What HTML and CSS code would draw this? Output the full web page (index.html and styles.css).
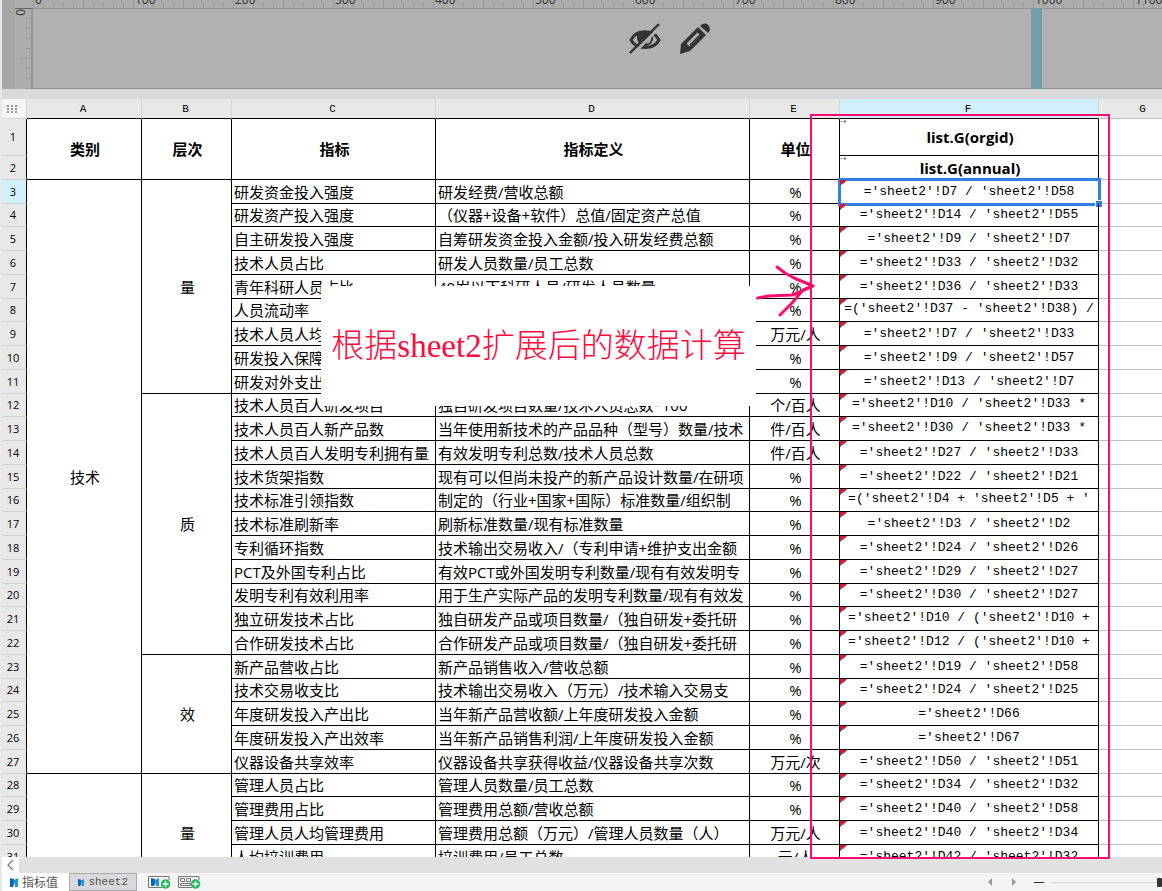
FILE: index.html
```html
<!DOCTYPE html>
<html lang="zh-CN">

<head>
  <meta charset="UTF-8">
  <title>指标值</title>
  <link rel="stylesheet" href="styles.css">
</head>

<body>
  <div class="designer">
    <div class="margin-bar"></div>
    <div class="ruler-left"><span>0</span></div>
    <div class="canvas-area">
      <div class="ruler-top">
        <span>0</span><span>100</span><span>200</span><span>300</span><span>400</span><span>500</span><span>600</span><span>700</span><span>800</span><span>900</span><span>1000</span><span>1100</span>
      </div>
      <div class="canvas">
        <div class="canvas-page"></div>
        <div class="canvas-handle"></div>
        <div class="canvas-rest"></div>
        <div class="canvas-tools">
          <button type="button" aria-label="隐藏">
            <svg width="34" height="32" viewBox="0 0 34 32">
              <path d="M3 17 C8 6 26 6 31 17 C26 27 8 27 3 17 Z" fill="none" stroke="#333" stroke-width="3"/>
              <path d="M9 10 C13 7 21 7 25 10 C26 18 23 23 17 23 C11 23 8 17 9 10 Z" fill="#333"/>
              <path d="M19 20 Q23 18 22 13" fill="none" stroke="#b1b1b1" stroke-width="2"/>
              <path d="M3 33 L33 3" stroke="#b1b1b1" stroke-width="3"/>
              <path d="M2 30 L31 1" stroke="#333" stroke-width="2.4"/>
            </svg>
          </button>
          <button type="button" aria-label="编辑">
            <svg width="32" height="32" viewBox="0 0 32 32">
              <path d="M1 31 L2 21 L19 4 L27 12 L11 28 Z" fill="#333"/>
              <path d="M21 3 C24 0 27 0 29 2 C32 5 31 8 29 10 Z" fill="#333"/>
              <path d="M9 22 L20 11" stroke="#b1b1b1" stroke-width="4"/>
              <path d="M11 22 L22 11" stroke="#333" stroke-width="1.6"/>
            </svg>
          </button>
        </div>
      </div>
    </div>
  </div>

  <div class="splitter"></div>

  <div class="sheet">
    <table class="grid">
      <colgroup>
        <col class="w-num"><col class="w-a"><col class="w-b"><col class="w-c"><col class="w-d"><col class="w-e"><col class="w-f"><col class="w-g">
      </colgroup>
      <thead>
        <tr>
          <th class="corner">
            <svg width="11" height="9" viewBox="0 0 11 9" fill="#999">
              <path d="M0 0h2v2h-2z M4 0h2v2h-2z M8 0h2v2h-2z M0 3h2v2h-2z M4 3h2v2h-2z M8 3h2v2h-2z M0 6h2v2h-2z M4 6h2v2h-2z M8 6h2v2h-2z"/>
            </svg>
          </th>
          <th>A</th><th>B</th><th>C</th><th>D</th><th>E</th><th class="active">F</th><th class="blank">G</th>
        </tr>
      </thead>
      <tbody class="titles">
        <tr class="tall"><th>1</th><td rowspan="2">类别</td><td rowspan="2">层次</td><td rowspan="2">指标</td><td rowspan="2">指标定义</td><td rowspan="2">单位</td><td class="expand">list.G(orgid)</td><td class="blank"></td></tr>
        <tr><th>2</th><td class="expand">list.G(annual)</td><td class="blank"></td></tr>
      </tbody>
      <tbody class="rows">
        <tr><th class="active">3</th><td rowspan="25" class="group">技术</td><td rowspan="9" class="group">量</td><td>研发资金投入强度</td><td>研发经费/营收总额</td><td class="unit">%</td><td class="formula selected">='sheet2'!D7 / 'sheet2'!D58</td><td class="blank"></td></tr>
        <tr><th>4</th><td>研发资产投入强度</td><td>（仪器+设备+软件）总值/固定资产总值</td><td class="unit">%</td><td class="formula">='sheet2'!D14 / 'sheet2'!D55</td><td class="blank"></td></tr>
        <tr><th>5</th><td>自主研发投入强度</td><td>自筹研发资金投入金额/投入研发经费总额</td><td class="unit">%</td><td class="formula">='sheet2'!D9 / 'sheet2'!D7</td><td class="blank"></td></tr>
        <tr><th>6</th><td>技术人员占比</td><td>研发人员数量/员工总数</td><td class="unit">%</td><td class="formula">='sheet2'!D33 / 'sheet2'!D32</td><td class="blank"></td></tr>
        <tr><th>7</th><td>青年科研人员占比</td><td>40岁以下科研人员/研发人员数量</td><td class="unit">%</td><td class="formula">='sheet2'!D36 / 'sheet2'!D33</td><td class="blank"></td></tr>
        <tr><th>8</th><td>人员流动率</td><td></td><td class="unit">%</td><td class="formula"><div class="clip">=('sheet2'!D37 - 'sheet2'!D38) /<br>'sheet2'!D33</div></td><td class="blank"></td></tr>
        <tr><th>9</th><td>技术人员人均</td><td></td><td class="unit">万元/人</td><td class="formula">='sheet2'!D7 / 'sheet2'!D33</td><td class="blank"></td></tr>
        <tr><th>10</th><td>研发投入保障</td><td></td><td class="unit">%</td><td class="formula">='sheet2'!D9 / 'sheet2'!D57</td><td class="blank"></td></tr>
        <tr><th>11</th><td>研发对外支出</td><td></td><td class="unit">%</td><td class="formula">='sheet2'!D13 / 'sheet2'!D7</td><td class="blank"></td></tr>
        <tr><th>12</th><td rowspan="11" class="group">质</td><td>技术人员百人研发项目</td><td>独自研发项目数量/技术人员总数*100</td><td class="unit">个/百人</td><td class="formula"><div class="clip">='sheet2'!D10 / 'sheet2'!D33 *</div></td><td class="blank"></td></tr>
        <tr><th>13</th><td>技术人员百人新产品数</td><td>当年使用新技术的产品品种（型号）数量/技术</td><td class="unit">件/百人</td><td class="formula"><div class="clip">='sheet2'!D30 / 'sheet2'!D33 *</div></td><td class="blank"></td></tr>
        <tr><th>14</th><td>技术人员百人发明专利拥有量</td><td>有效发明专利总数/技术人员总数</td><td class="unit">件/百人</td><td class="formula">='sheet2'!D27 / 'sheet2'!D33</td><td class="blank"></td></tr>
        <tr><th>15</th><td>技术货架指数</td><td>现有可以但尚未投产的新产品设计数量/在研项</td><td class="unit">%</td><td class="formula">='sheet2'!D22 / 'sheet2'!D21</td><td class="blank"></td></tr>
        <tr><th>16</th><td>技术标准引领指数</td><td>制定的（行业+国家+国际）标准数量/组织制</td><td class="unit">%</td><td class="formula"><div class="clip">=('sheet2'!D4 + 'sheet2'!D5 + '<br>sheet2'!D6) / 'sheet2'!D3</div></td><td class="blank"></td></tr>
        <tr><th>17</th><td>技术标准刷新率</td><td>刷新标准数量/现有标准数量</td><td class="unit">%</td><td class="formula">='sheet2'!D3 / 'sheet2'!D2</td><td class="blank"></td></tr>
        <tr><th>18</th><td>专利循环指数</td><td>技术输出交易收入/（专利申请+维护支出金额</td><td class="unit">%</td><td class="formula">='sheet2'!D24 / 'sheet2'!D26</td><td class="blank"></td></tr>
        <tr><th>19</th><td>PCT及外国专利占比</td><td>有效PCT或外国发明专利数量/现有有效发明专</td><td class="unit">%</td><td class="formula">='sheet2'!D29 / 'sheet2'!D27</td><td class="blank"></td></tr>
        <tr><th>20</th><td>发明专利有效利用率</td><td>用于生产实际产品的发明专利数量/现有有效发</td><td class="unit">%</td><td class="formula">='sheet2'!D30 / 'sheet2'!D27</td><td class="blank"></td></tr>
        <tr><th>21</th><td>独立研发技术占比</td><td>独自研发产品或项目数量/（独自研发+委托研</td><td class="unit">%</td><td class="formula"><div class="clip">='sheet2'!D10 / ('sheet2'!D10 +<br>'sheet2'!D11 + 'sheet2'!D12)</div></td><td class="blank"></td></tr>
        <tr><th>22</th><td>合作研发技术占比</td><td>合作研发产品或项目数量/（独自研发+委托研</td><td class="unit">%</td><td class="formula"><div class="clip">='sheet2'!D12 / ('sheet2'!D10 +<br>'sheet2'!D11 + 'sheet2'!D12)</div></td><td class="blank"></td></tr>
        <tr><th>23</th><td rowspan="5" class="group">效</td><td>新产品营收占比</td><td>新产品销售收入/营收总额</td><td class="unit">%</td><td class="formula">='sheet2'!D19 / 'sheet2'!D58</td><td class="blank"></td></tr>
        <tr><th>24</th><td>技术交易收支比</td><td>技术输出交易收入（万元）/技术输入交易支</td><td class="unit">%</td><td class="formula">='sheet2'!D24 / 'sheet2'!D25</td><td class="blank"></td></tr>
        <tr><th>25</th><td>年度研发投入产出比</td><td>当年新产品营收额/上年度研发投入金额</td><td class="unit">%</td><td class="formula">='sheet2'!D66</td><td class="blank"></td></tr>
        <tr><th>26</th><td>年度研发投入产出效率</td><td>当年新产品销售利润/上年度研发投入金额</td><td class="unit">%</td><td class="formula">='sheet2'!D67</td><td class="blank"></td></tr>
        <tr><th>27</th><td>仪器设备共享效率</td><td>仪器设备共享获得收益/仪器设备共享次数</td><td class="unit">万元/次</td><td class="formula">='sheet2'!D50 / 'sheet2'!D51</td><td class="blank"></td></tr>
        <tr><th>28</th><td rowspan="5" class="group"></td><td rowspan="5" class="group">量</td><td>管理人员占比</td><td>管理人员数量/员工总数</td><td class="unit">%</td><td class="formula">='sheet2'!D34 / 'sheet2'!D32</td><td class="blank"></td></tr>
        <tr><th>29</th><td>管理费用占比</td><td>管理费用总额/营收总额</td><td class="unit">%</td><td class="formula">='sheet2'!D40 / 'sheet2'!D58</td><td class="blank"></td></tr>
        <tr><th>30</th><td>管理人员人均管理费用</td><td>管理费用总额（万元）/管理人员数量（人）</td><td class="unit">万元/人</td><td class="formula">='sheet2'!D40 / 'sheet2'!D34</td><td class="blank"></td></tr>
        <tr><th>31</th><td>人均培训费用</td><td>培训费用/员工总数</td><td class="unit">元/人</td><td class="formula">='sheet2'!D42 / 'sheet2'!D32</td><td class="blank"></td></tr>
        <tr><th></th><td></td><td></td><td></td><td></td><td class="blank"></td></tr>
      </tbody>
    </table>
  </div>

  <div class="scrollbar"><button type="button" aria-label="向左滚动">
    <svg width="8" height="12" viewBox="0 0 8 12"><path d="M6 1 L1 6 L6 11" fill="none" stroke="#777" stroke-width="1.2"/></svg>
  </button></div>

  <div class="tabs">
    <a href="#sheet1" class="tab current">
      <svg width="8" height="9" viewBox="0 0 8 9"><path d="M0 0 L4 1 V6 L3 9 H0 Z" fill="#0a67b2"/><path d="M4 2 L8 0 V9 H5 V6 L3 5 Z" fill="#2196d8"/></svg>
      指标值</a>
    <a href="#sheet2" class="tab other">
      <svg width="8" height="9" viewBox="0 0 8 9"><path d="M0 0 L4 1 V6 L3 9 H0 Z" fill="#0a67b2"/><path d="M4 2 L8 0 V9 H5 V6 L3 5 Z" fill="#2196d8"/></svg>
      sheet2</a>
    <button type="button" class="add" aria-label="新增报表">
      <svg width="23" height="14" viewBox="0 0 23 14">
        <path d="M21 5 V1.5 H0.5 V12.5 H14" fill="none" stroke="#777"/>
        <path d="M3 3 L7 4 V9 L6 11 H3 Z" fill="#0a67b2"/><path d="M7 5 L11 3 V11 H8 V9 L6 8 Z" fill="#2196d8"/>
        <circle cx="17.5" cy="9" r="4.7" fill="#1db954"/><path d="M14.5 9 H20.5 M17.5 6 V12" stroke="#fff" stroke-width="1.5"/>
      </svg>
    </button>
    <button type="button" class="add" aria-label="新增聚合块">
      <svg width="23" height="14" viewBox="0 0 23 14">
        <path d="M21 5 V1.5 H0.5 V12.5 H14 M2.5 3.5 H6.5 V6.5 H2.5 Z M8.5 3.5 H12.5 V6.5 H8.5 Z M2.5 10.5 V8.5 H12.5 V10.5 Z" fill="none" stroke="#777"/>
        <circle cx="17.5" cy="9" r="4.7" fill="#1db954"/><path d="M14.5 9 H20.5 M17.5 6 V12" stroke="#fff" stroke-width="1.5"/>
      </svg>
    </button>
    <div class="zoom">
      <svg width="28" height="8" viewBox="0 0 28 8" fill="#999"><path d="M4 0 V8 L0 4 Z M24 0 V8 L28 4 Z"/></svg>
      <button type="button" class="minus" aria-label="缩小"></button>
      <input type="range" min="0" max="100" value="100" aria-label="缩放">
    </div>
  </div>

  <!-- notes on top of the sheet -->
  <div class="mark-box"></div>
  <div class="note">根据sheet2扩展后的数据计算</div>
  <svg class="mark-arrow" width="60" height="54" viewBox="0 0 60 54">
    <path d="M2 34 L12 32 L36 31 L44 28 L57 22 M21 3 L29 9 L38 14 L50 19 L57 22 L47 26 L36 39 L24 51" fill="none" stroke="#ff0d6e" stroke-width="3" stroke-linejoin="round" stroke-linecap="round"/>
  </svg>
</body>

</html>
```
FILE: styles.css
```css
* {
  box-sizing: border-box;
}

body {
  margin: 0;
  padding-left: 2px;
  height: 100vh;
  display: flex;
  flex-direction: column;
  position: relative;
  overflow: hidden;
  background-color: #e8e8e8;
  color: #000;
  font-family: "Open Sans", "Noto Sans CJK SC", sans-serif;
  font-size: 15px;
}

button {
  padding: 0;
  border: none;
  background: none;
  display: flex;
  align-items: center;
  justify-content: center;
}

svg {
  display: block;
}

/* report designer behind the sheet */
.designer {
  display: flex;
  height: 89px;
  flex: none;
  background-color: #adadad;
}

.margin-bar {
  width: 13px;
  background-color: #a7a7a7;
}

.ruler-left {
  width: 18px;
  margin-top: 8px;
  border-top: 1px solid #666;
  border-right: 2px solid #979797;
  background-image:
    linear-gradient(#999, #999),
    repeating-linear-gradient(to bottom, transparent 0 9px, #999 9px 10px);
  background-size: 11px 1px, 5px 100%;
  background-position: right 49px, right 0;
  background-repeat: no-repeat;
  color: #333;
  font-size: 12px;
}

.ruler-left span {
  display: block;
  width: 10px;
  line-height: 10px;
  writing-mode: vertical-rl;
}

.canvas-area {
  flex: 1;
  min-width: 0;
  display: flex;
  flex-direction: column;
}

.ruler-top {
  display: flex;
  height: 8px;
  overflow: hidden;
  line-height: 0;
  font-size: 12px;
  color: #333;
  background-image:
    repeating-linear-gradient(to right, #999 0 1px, transparent 1px 50px),
    repeating-linear-gradient(to right, #999 0 1px, transparent 1px 10px);
  background-size: 100% 8px, 100% 5px;
  background-position: 0 0, 0 3px;
  background-repeat: no-repeat;
}

.ruler-top span {
  flex: 0 0 100px;
  padding-left: 2px;
}

.canvas {
  flex: 1;
  display: flex;
  position: relative;
  background-color: #b1b1b1;
}

.canvas-page {
  flex: 0 0 999px;
  border: 1px solid #929292;
  border-left: none;
}

.canvas-handle {
  width: 10px;
  background-color: #6f9eaa;
}

.canvas-rest {
  flex: 1;
  border-top: 1px solid #929292;
  border-bottom: 1px solid #929292;
}

.canvas-tools {
  position: absolute;
  top: 15px;
  left: 595px;
  display: flex;
  gap: 17px;
}

.splitter {
  height: 10px;
  flex: none;
  background-color: #d9d9db;
}

/* sheet */
.sheet {
  flex: 1;
  min-height: 0;
  overflow: hidden;
  background-color: #fff;
}

.grid {
  width: 1187px;
  table-layout: fixed;
  border-collapse: separate;
  border-spacing: 0;
}

.w-num { width: 25px; }
.w-a { width: 115px; }
.w-b { width: 90px; }
.w-c { width: 204px; }
.w-d { width: 314px; }
.w-e { width: 90px; }
.w-f { width: 259px; }
.w-g { width: 90px; }

.grid th,
.grid td {
  padding: 0;
  border-right: 1px solid #000;
  border-bottom: 1px solid #000;
  line-height: 20px;
  white-space: nowrap;
}

.grid thead th {
  height: 20px;
  padding: 2px 2px 0 0;
  border-right-color: #d5d5d8;
  background-color: #e8e8e8;
  font-family: "Liberation Mono", monospace;
  font-size: 11px;
  font-weight: normal;
  line-height: 17px;
}

.grid thead .corner {
  border-bottom-color: #d5d5d8;
  background-color: #f5f5f8;
}

.corner svg {
  margin-left: 5px;
}

.grid tbody th {
  padding-right: 2px;
  border-bottom-color: #cfcfd6;
  background-color: #e8e8e8;
  font-size: 11px;
  font-weight: normal;
}

.grid th.active {
  background-color: #cff0fc;
}

.grid .blank {
  border-right-color: #c0c0c0;
  border-bottom-color: #c0c0c0;
}

.titles tr {
  height: 24px;
}

.titles .tall {
  height: 37px;
}

.titles td {
  padding-left: 2px;
  font-weight: bold;
  text-align: center;
}

.rows tr {
  height: 24px;
}

.rows tr:nth-child(4n + 2) {
  height: 23px;
}

.rows td {
  padding-left: 2px;
  overflow: hidden;
}

.rows .group,
.rows .unit {
  text-align: center;
}

.grid .formula,
.grid .expand {
  position: relative;
  text-align: center;
}

.grid .formula {
  padding: 0;
  font-family: "Liberation Mono", monospace;
  font-size: 13px;
}

.clip {
  height: 22px;
  line-height: 20px;
  overflow: hidden;
  white-space: pre;
}

/* left-parent mark in the corner of a formula cell */
.formula::before {
  content: "";
  position: absolute;
  top: 0;
  left: 0;
  width: 7px;
  height: 6px;
  background: linear-gradient(140deg, #e8112d 45%, #888 45% 55%, transparent 55%);
}

.expand::before {
  content: "→";
  position: absolute;
  top: 0;
  left: 0;
  color: #666;
  font-family: "DejaVu Sans", sans-serif;
  font-size: 8px;
  font-weight: normal;
  line-height: 6px;
}

.rows .selected {
  overflow: visible;
  outline: 3px solid #2f7fe6;
  outline-offset: -1px;
}

.selected::after {
  content: "";
  position: absolute;
  right: -4px;
  bottom: -4px;
  width: 6px;
  height: 6px;
  border: 1px solid #fff;
  border-width: 1px 0 0 1px;
  background-color: #2f7fe6;
}

/* bottom */
.scrollbar {
  height: 16px;
  flex: none;
  background-color: #e1e1e1;
}

.scrollbar button {
  width: 17px;
  height: 16px;
  background-color: #fff;
}

.tabs {
  display: flex;
  align-items: center;
  height: 18px;
  flex: none;
  overflow: hidden;
  background-color: #f4f4f6;
}

.tab {
  display: flex;
  align-items: center;
  gap: 4px;
  height: 18px;
  padding: 0 8px;
  color: #555;
  font-size: 12px;
  text-decoration: none;
  white-space: nowrap;
}

.current {
  width: 67px;
  background-color: #fff;
}

.other {
  width: 68px;
  border: 1px solid #a8a8ae;
  background-color: #d9d9dd;
  font-family: "Liberation Mono", monospace;
  font-size: 11px;
}

.add {
  margin-left: 11px;
}

.add + .add {
  margin-left: 7px;
}

.zoom {
  display: flex;
  align-items: center;
  margin-left: auto;
}

.minus {
  width: 10px;
  height: 1px;
  margin: 0 7px 0 18px;
  background-color: #333;
}

.zoom input {
  width: 111px;
  height: 16px;
  margin: 0;
  appearance: none;
  background: linear-gradient(#d3d3d3, #d3d3d3) center / 100% 1px no-repeat;
}

.zoom input::-webkit-slider-thumb {
  appearance: none;
  width: 5px;
  height: 9px;
  border-radius: 1px;
  background-color: #333;
}

/* notes */
.mark-box {
  position: absolute;
  top: 114px;
  left: 810px;
  width: 300px;
  height: 745px;
  border: 2px solid #ff0d6e;
}

.note {
  position: absolute;
  top: 286px;
  left: 321px;
  width: 435px;
  height: 120px;
  background-color: #fff;
  color: #ff0a3c;
  font-family: "Liberation Serif", "Noto Sans CJK SC", serif;
  font-size: 33px;
  font-weight: 300;
  line-height: 120px;
  text-align: center;
  white-space: nowrap;
}

.mark-arrow {
  position: absolute;
  top: 264px;
  left: 756px;
}
```
